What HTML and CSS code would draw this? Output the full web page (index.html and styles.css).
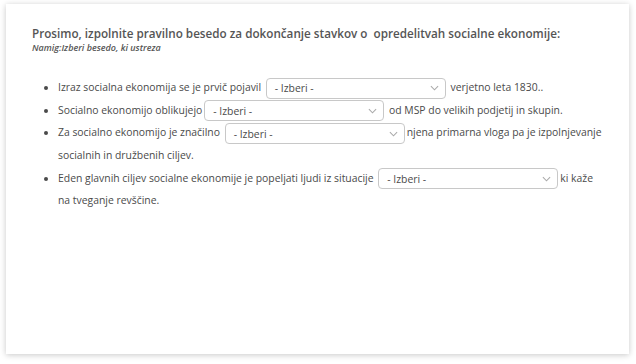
FILE: index.html
```html
<!DOCTYPE html>
<html lang="sl">
<head>
<meta charset="utf-8">
<link rel="stylesheet" href="styles.css">
</head>
<body>
<div class="card">
  <h1 class="title">Prosimo, izpolnite pravilno besedo za dokončanje stavkov o&nbsp; opredelitvah socialne ekonomije:</h1>
  <p class="hint">Namig:Izberi besedo, ki ustreza</p>
  <ul class="items">
    <li>Izraz socialna ekonomija se je prvič pojavil <span class="sel">- Izberi -<svg viewBox="0 0 10 6" class="chev"><path d="M1 1l4 4 4-4"/></svg></span> verjetno leta 1830..</li>
    <li>Socialno ekonomijo oblikujejo<span class="sel">- Izberi -<svg viewBox="0 0 10 6" class="chev"><path d="M1 1l4 4 4-4"/></svg></span> od MSP do velikih podjetij in skupin.</li>
    <li>Za socialno ekonomijo je značilno <span class="sel">- Izberi -<svg viewBox="0 0 10 6" class="chev"><path d="M1 1l4 4 4-4"/></svg></span>njena primarna vloga pa je izpolnjevanje socialnih in družbenih ciljev.</li>
    <li>Eden glavnih ciljev socialne ekonomije je popeljati ljudi iz situacije <span class="sel">- Izberi -<svg viewBox="0 0 10 6" class="chev"><path d="M1 1l4 4 4-4"/></svg></span>ki kaže na tveganje revščine.</li>
  </ul>
</div>
</body>
</html>
```
FILE: styles.css
```css
html, body { margin: 0; padding: 0; background: #fff; }
body { padding: 4px 7px 10px 6px; font-family: "Open Sans", sans-serif; color: #555; }
.card {
  height: 350px;
  box-sizing: border-box;
  background: #fff;
  box-shadow: 0 1px 6px rgba(0,0,0,0.22);
  padding: 21px 22px 0 26px;
}
.title { margin: 0; font-size: 11.7px; font-weight: 600; line-height: 16px; color: #555; }
.hint { margin: 0; font-size: 9px; font-style: italic; font-weight: 600; line-height: 13px; color: #555; }
.items { margin: 22px 0 0 0; padding-left: 26px; font-size: 10.4px; line-height: 22.4px; color: #4a4a4a; }
.sel {
  display: inline-flex; align-items: center; justify-content: space-between;
  box-sizing: border-box; width: 180px; height: 21px;
  border: 1px solid #c8c8c8; border-radius: 4px;
  padding: 0 6px 0 8px; margin: 0 2px; vertical-align: middle;
  font-size: 10.4px; color: #4a4a4a; line-height: 18px;
}
.chev { width: 9px; height: 6px; fill: none; stroke: #aaa; stroke-width: 1.2; }
```
